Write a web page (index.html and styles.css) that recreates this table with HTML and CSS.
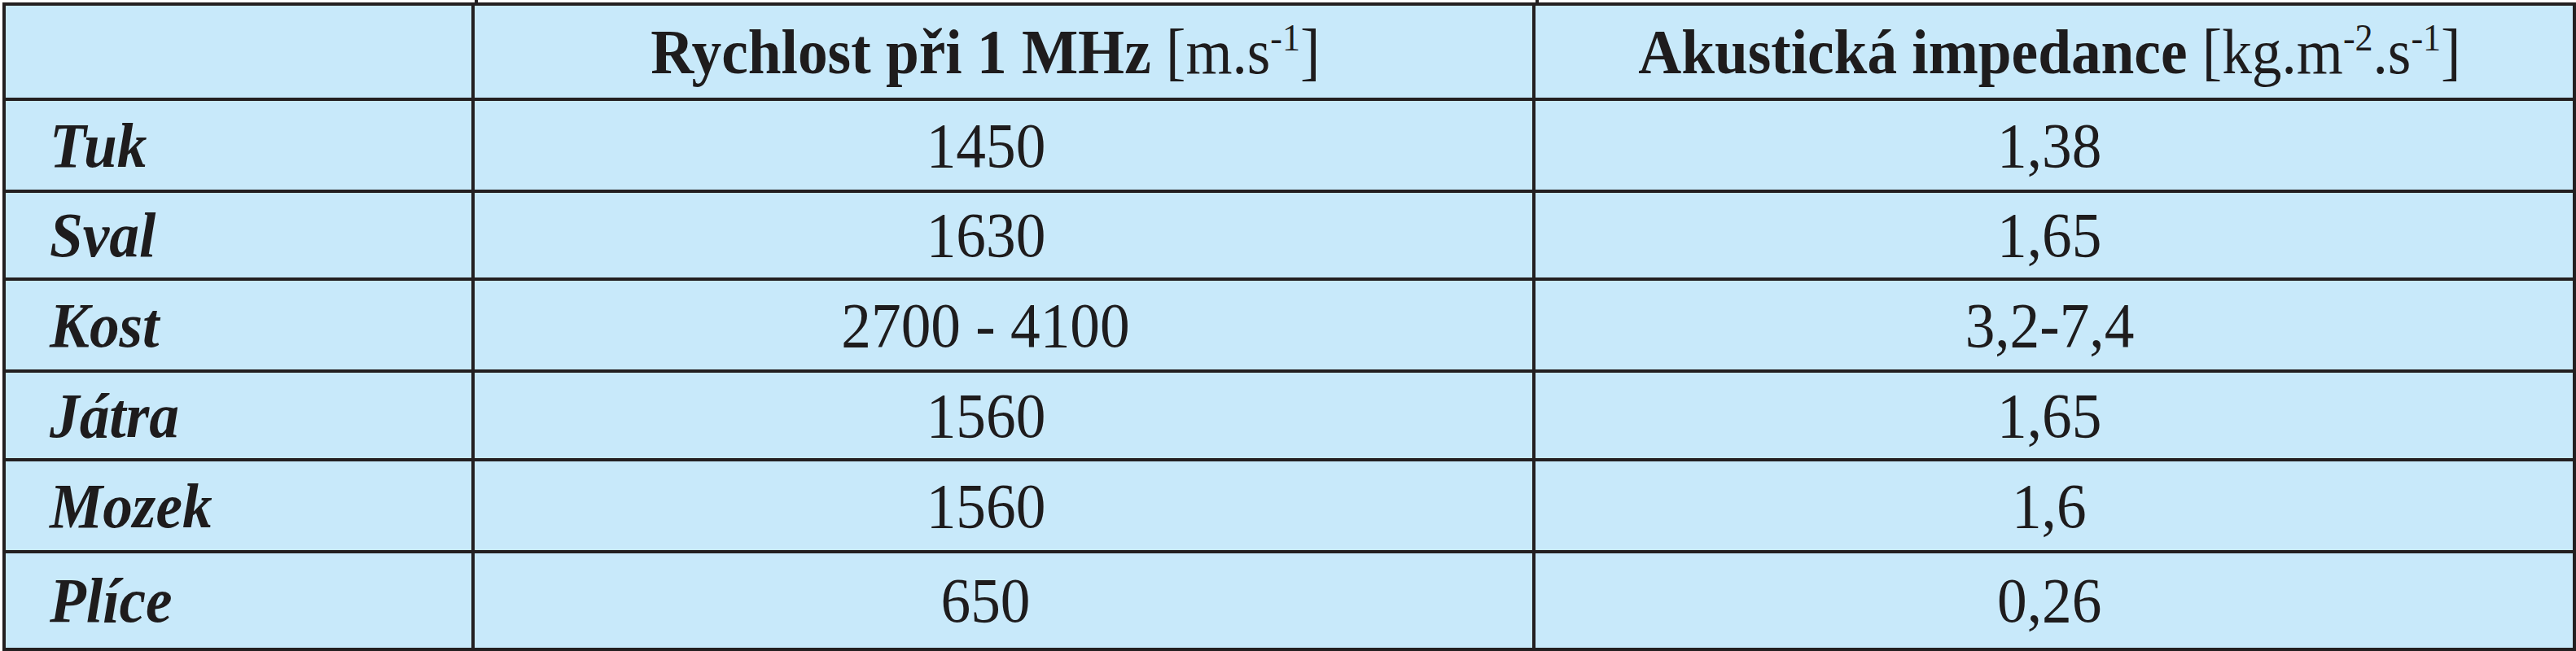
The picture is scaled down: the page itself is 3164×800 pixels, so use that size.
FILE: index.html
```html
<!DOCTYPE html>
<html lang="cs">
<head>
<meta charset="utf-8">
<title>Tabulka</title>
<link rel="stylesheet" href="styles.css">
</head>
<body>
<div class="page">
  <div class="stub">
    <div class="stub-cell"></div>
    <div class="stub-cell"></div>
    <div class="stub-cell last"></div>
  </div>
  <div class="grid">
    <div class="cell label"></div>
    <div class="cell c2 head"><span class="t"><b>Rychlost při 1 MHz</b> [m.s<sup>-1</sup>]</span></div>
    <div class="cell c3 head"><span class="t"><b>Akustická impedance</b> [kg.m<sup>-2</sup>.s<sup>-1</sup>]</span></div>

    <div class="cell label"><span class="t l">Tuk</span></div>
    <div class="cell c2"><span class="t">1450</span></div>
    <div class="cell c3"><span class="t">1,38</span></div>

    <div class="cell label"><span class="t l">Sval</span></div>
    <div class="cell c2"><span class="t">1630</span></div>
    <div class="cell c3"><span class="t">1,65</span></div>

    <div class="cell label"><span class="t l">Kost</span></div>
    <div class="cell c2"><span class="t">2700 - 4100</span></div>
    <div class="cell c3"><span class="t">3,2-7,4</span></div>

    <div class="cell label"><span class="t l">Játra</span></div>
    <div class="cell c2"><span class="t">1560</span></div>
    <div class="cell c3"><span class="t">1,65</span></div>

    <div class="cell label"><span class="t l">Mozek</span></div>
    <div class="cell c2"><span class="t">1560</span></div>
    <div class="cell c3"><span class="t">1,6</span></div>

    <div class="cell label"><span class="t l">Plíce</span></div>
    <div class="cell c2"><span class="t">650</span></div>
    <div class="cell c3"><span class="t">0,26</span></div>
  </div>
</div>
</body>
</html>
```
FILE: styles.css
```css
html, body {
  margin: 0;
  padding: 0;
  background: #ffffff;
}
.page {
  width: 3164px;
  height: 800px;
  padding-left: 3px;
  box-sizing: border-box;
  font-family: "Liberation Serif", "Times New Roman", serif;
  color: #1e1c1d;
}
.stub {
  display: grid;
  grid-template-columns: 576px 1303px 1278px;
  height: 3px;
  padding-left: 4px;
}
.stub-cell {
  border-right: 4px solid #231f20;
  margin-right: -4px;
}
.stub-cell.last {
  border-right: none;
}
.grid {
  display: grid;
  grid-template-columns: 572px 1299px 1274px;
  grid-template-rows: 113px 109px 104px 109px 105px 109px 116px;
  gap: 4px;
  padding: 4px;
  background: #231f20;
  width: 3161px;
  box-sizing: border-box;
}
.cell {
  background: #c8e9fa;
  display: flex;
  align-items: center;
  overflow: hidden;
  font-size: 78px;
  line-height: 1;
}
.label {
  justify-content: flex-start;
  padding-left: 54px;
  font-weight: bold;
  font-style: italic;
}
.c2 {
  justify-content: center;
  padding-right: 44px;
}
.c3 {
  justify-content: center;
  padding-right: 12px;
}
.t {
  display: inline-block;
  white-space: nowrap;
  transform: scaleX(0.94);
  transform-origin: center;
}
.t.l {
  transform-origin: left center;
}
.head b {
  font-weight: bold;
}
sup {
  font-size: 0.6em;
  vertical-align: 0.6em;
  line-height: 0;
}
```
